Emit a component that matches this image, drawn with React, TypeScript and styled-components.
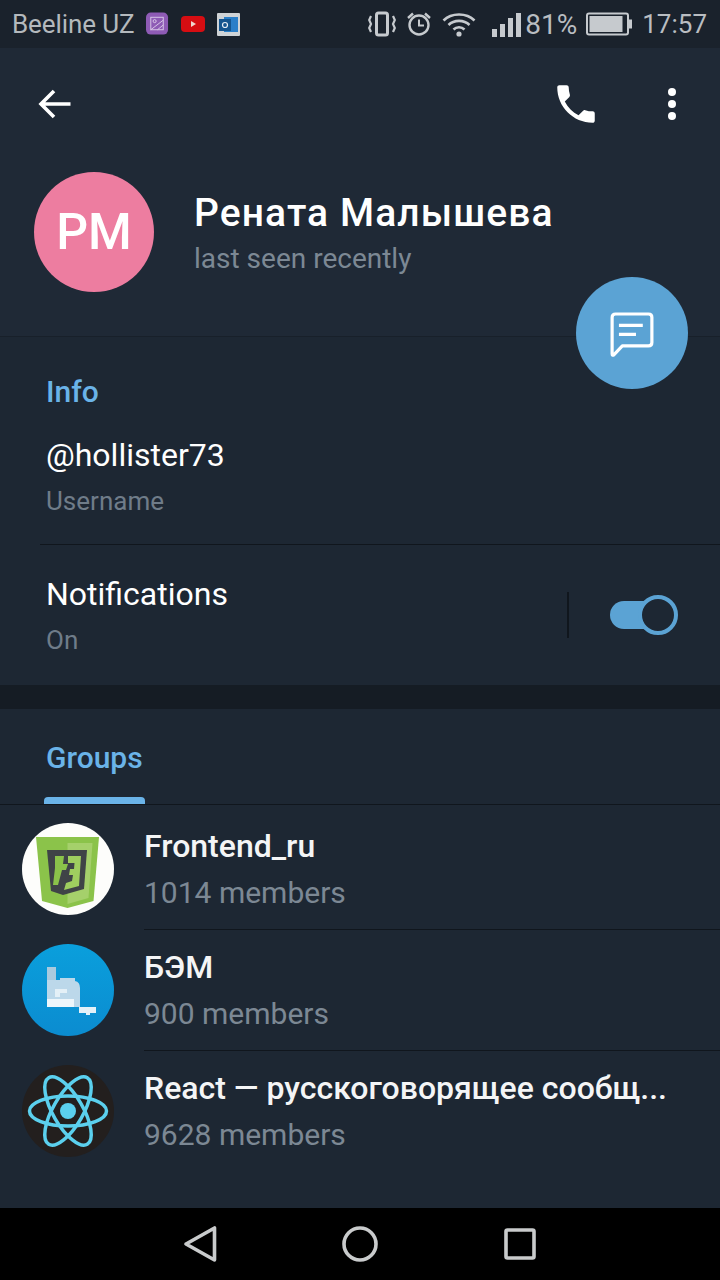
import styled, { createGlobalStyle } from "styled-components";

const GlobalStyle = createGlobalStyle`
  html, body { margin: 0; padding: 0; background: #1d2733; }
  body { font-family: Roboto, "Noto Sans", sans-serif; -webkit-font-smoothing: antialiased; }
  * { box-sizing: border-box; }
`;

const groups = [
  { name: "Frontend_ru", members: "1014 members", logo: "css" },
  { name: "БЭМ", members: "900 members", logo: "bem" },
  { name: "React — русскоговорящее сообщ...", members: "9628 members", logo: "react" },
];

const CssLogo = () => (
  <svg width="92" height="92" viewBox="0 0 92 92">
    <circle cx="46" cy="46" r="46" fill="#fdfdfb" />
    <path d="M14 14H77L71.500 78L45.500 85L20 78Z" fill="#8bc34a" />
    <path d="M45.500 20H70.500L66.500 75L45.500 81Z" fill="#a5d06b" />
    <path d="M25 27H65L62 66L41 72L29 68Z" fill="#3f4347" />
    <path d="M33 33H42L41 41H46L44 47H40L36 62H31L33 45Z" fill="#8bc34a" />
    <path d="M46 33H59L57 63L42 67L44 60L50 58L51 52H47L48 46H52L52.500 40H46Z" fill="#9fce5f" />
  </svg>
);

const BemLogo = () => (
  <svg width="92" height="92" viewBox="0 0 92 92">
    <defs>
      <linearGradient id="bemBg" x1="0" y1="0" x2="0" y2="1">
        <stop offset="0" stopColor="#0a9fdc" />
        <stop offset="1" stopColor="#0b8cd0" />
      </linearGradient>
    </defs>
    <circle cx="46" cy="46" r="46" fill="url(#bemBg)" />
    <path d="M25 23H34V36H38V34H53V37Q58 38 58 44V63H25Z" fill="#bcd8ea" />
    <path d="M25 23H34V36H25Z" fill="#a9cade" />
    <path d="M25 55H52V63H25Z" fill="#eef6fb" />
    <path d="M33 45H45V49H38V53H33Z" fill="#e4f0f7" />
    <path d="M57 63H74V69H68V71H64V69H57Z" fill="#e4f1f8" />
  </svg>
);

const ReactLogo = () => (
  <svg width="92" height="92" viewBox="0 0 92 92">
    <circle cx="46" cy="46" r="46" fill="#231f1e" />
    <g fill="none" stroke="#5bd0ee" strokeWidth="3.500">
      <ellipse cx="46" cy="46" rx="38.500" ry="15" />
      <ellipse cx="46" cy="46" rx="38.500" ry="15" transform="rotate(60 46 46)" />
      <ellipse cx="46" cy="46" rx="38.500" ry="15" transform="rotate(120 46 46)" />
    </g>
    <circle cx="46" cy="46" r="8" fill="#5bd0ee" />
  </svg>
);

const logos: Record<string, JSX.Element> = {
  css: <CssLogo />,
  bem: <BemLogo />,
  react: <ReactLogo />,
};

const App = (): JSX.Element => {
  return (
    <Page>
      <GlobalStyle />
      <StatusBar>
        <StatusSide $gap={12}>
          <Carrier>Beeline UZ</Carrier>
          <svg width="23" height="24" viewBox="0 0 24 24">
            <rect width="23" height="23" rx="5" fill="#8e5bb5" />
            <rect x="5" y="5" width="13" height="13" fill="none" stroke="#d9c8e8" strokeWidth="1" />
            <path d="M5 18L18 8M12 18L18 13" fill="none" stroke="#d9c8e8" />
            <circle cx="9" cy="9" r="1.600" fill="none" stroke="#d9c8e8" />
          </svg>
          <svg width="24" height="16" viewBox="0 0 24 16">
            <rect width="24" height="16" rx="4" fill="#d60d12" />
            <path d="M10 5L15 8L10 11Z" fill="#f0d8d0" />
          </svg>
          <svg width="23" height="23" viewBox="0 0 23 23">
            <rect width="23" height="23" rx="1" fill="#cfd3d6" />
            <rect x="7" y="4" width="14" height="15" fill="#2a7fc9" />
            <rect x="2" y="6" width="12" height="12" fill="#14558f" />
            <circle cx="8" cy="12" r="2.500" fill="none" stroke="#e6eef5" strokeWidth="1.200" />
          </svg>
        </StatusSide>
        <StatusSide $gap={10}>
          <svg width="28" height="26" viewBox="0 0 28 26">
            <rect x="8.500" y="2" width="11" height="22" rx="2" fill="none" stroke="#c6cace" strokeWidth="3" />
            <path d="M3 5L1.200 9L3 13L1.200 17L3 21M25 5L26.800 9L25 13L26.800 17L25 21" fill="none" stroke="#c6cace" strokeWidth="2.200" />
          </svg>
          <svg width="26" height="26" viewBox="0 0 26 26">
            <circle cx="13" cy="14" r="9.500" fill="none" stroke="#c6cace" strokeWidth="2.400" />
            <path d="M13 8.500V14.500H18" fill="none" stroke="#c6cace" strokeWidth="2" />
            <path d="M2 7L7 2.500M24 7L19 2.500" fill="none" stroke="#c6cace" strokeWidth="2.400" />
          </svg>
          <WifiIcon width="34" height="26" viewBox="0 0 34 26">
            <g fill="none" stroke="#c6cace" strokeWidth="2.600">
              <path d="M1.500 9.500C9.500 1.500 24.500 1.500 32.500 9.500" />
              <path d="M6.500 14C12 8.500 22 8.500 27.500 14" />
              <path d="M11.500 18.500C14.500 15.500 19.500 15.500 22.500 18.500" />
            </g>
            <circle cx="17" cy="23" r="2.600" fill="#c6cace" />
          </WifiIcon>
          <SignalBars>
            <Bar $h={8} />
            <Bar $h={13} />
            <Bar $h={19} />
            <Bar $h={24} />
          </SignalBars>
          <Percent>81%</Percent>
          <svg width="46" height="24" viewBox="0 0 46 24">
            <rect x="1" y="1.500" width="41" height="21" rx="2" fill="none" stroke="#c6cace" strokeWidth="2" />
            <rect x="3.500" y="4" width="33" height="16" fill="#c6cace" />
            <rect x="43" y="7.500" width="3" height="9" fill="#c6cace" />
          </svg>
          <Clock>17:57</Clock>
        </StatusSide>
      </StatusBar>

      <Header>
        <TopBar>
          <svg width="36" height="36" viewBox="0 0 36 36">
            <path d="M33.500 18H4M17 5L4 18L17 31" fill="none" stroke="#fff" strokeWidth="3.600" />
          </svg>
          <TopActions>
            <svg width="50" height="50" viewBox="0 0 24 24">
              <path fill="#fff" d="M6.620 10.790c1.440 2.830 3.760 5.140 6.590 6.590l2.200-2.200c.27-.27.67-.36 1.020-.24 1.120.37 2.330.57 3.570.57.550 0 1 .45 1 1V20c0 .550-.45 1-1 1-9.390 0-17-7.610-17-17 0-.550.450-1 1-1h3.500c.55 0 1 .45 1 1 0 1.250.2 2.450.57 3.570.11.350.03.740-.25 1.020l-2.200 2.200z" />
            </svg>
            <Dots>
              <Dot />
              <Dot />
              <Dot />
            </Dots>
          </TopActions>
        </TopBar>
        <Profile>
          <Avatar>РМ</Avatar>
          <ProfileText>
            <ProfileName>Рената Малышева</ProfileName>
            <ProfileStatus>last seen recently</ProfileStatus>
          </ProfileText>
        </Profile>
        <Fab>
          <svg width="50" height="50" viewBox="1.500 -0.500 44 44">
            <path d="M6 6Q6 3 9 3H38Q41 3 41 6V28Q41 31 38 31H15L7.500 39Q6 40 6 38Z" fill="none" stroke="#fff" strokeWidth="2.800" strokeLinejoin="round" />
            <path d="M12 13H33M12 21H27" fill="none" stroke="#fff" strokeWidth="2.800" />
          </svg>
        </Fab>
      </Header>

      <InfoSection>
        <SectionTitle>Info</SectionTitle>
        <InfoRow>
          <Primary>@hollister73</Primary>
          <Secondary>Username</Secondary>
        </InfoRow>
        <RowDivider />
        <NotifyRow>
          <div>
            <Primary>Notifications</Primary>
            <Secondary>On</Secondary>
          </div>
          <NotifyControls>
            <VLine />
            <Toggle>
              <ToggleKnob />
            </Toggle>
          </NotifyControls>
        </NotifyRow>
      </InfoSection>

      <Gap />

      <GroupsSection>
        <TabHead>
          <TabTitle>Groups</TabTitle>
          <TabMark />
        </TabHead>
        <GroupList>
          {groups.map((g) => (
            <GroupRow key={g.name}>
              <GroupLogo>{logos[g.logo]}</GroupLogo>
              <GroupBody>
                <GroupName>{g.name}</GroupName>
                <GroupMembers>{g.members}</GroupMembers>
              </GroupBody>
            </GroupRow>
          ))}
        </GroupList>
      </GroupsSection>

      <NavBar>
        <svg width="40" height="40" viewBox="0 0 40 40">
          <path d="M34.500 4V36L6 20Z" fill="none" stroke="#c9cbcc" strokeWidth="3.600" strokeLinejoin="round" />
        </svg>
        <svg width="40" height="40" viewBox="0 0 40 40">
          <circle cx="20" cy="20" r="16" fill="none" stroke="#c9cbcc" strokeWidth="3.600" />
        </svg>
        <svg width="40" height="40" viewBox="0 0 40 40">
          <rect x="6" y="6" width="28" height="28" rx="1.500" fill="none" stroke="#c9cbcc" strokeWidth="3.600" />
        </svg>
      </NavBar>
    </Page>
  );
};

export default App;

const Page = styled.div`
  width: 720px;
  height: 1280px;
  display: flex;
  flex-direction: column;
  background: #1d2733;
  overflow: hidden;
`;
const StatusBar = styled.div`
  height: 48px;
  flex: none;
  background: #1a222c;
  display: flex;
  justify-content: space-between;
  align-items: center;
  padding: 0 13px 0 12px;
`;
const StatusSide = styled.div<{ $gap: number }>`
  display: flex;
  align-items: center;
  gap: ${(p) => p.$gap}px;
`;
const Carrier = styled.span`
  font-size: 26px;
  color: #b4b9bd;
  letter-spacing: -0.1px;
`;
const WifiIcon = styled.svg`
  margin-right: 6px;
`;
const SignalBars = styled.div`
  display: flex;
  align-items: flex-end;
  gap: 3px;
  height: 25px;
  margin-right: -6px;
`;
const Bar = styled.div<{ $h: number }>`
  width: 5px;
  height: ${(p) => p.$h}px;
  background: #c6cace;
`;
const Percent = styled.span`
  font-size: 28px;
  color: #b9bdc1;
  margin-right: -1px;
`;
const Clock = styled.span`
  font-size: 26px;
  color: #b9bdc1;
`;
const Header = styled.div`
  position: relative;
  height: 289px;
  flex: none;
  background: #1f2936;
  border-bottom: 1px solid #18202a;
  padding: 0 0 0 34px;
`;
const TopBar = styled.div`
  height: 112px;
  display: flex;
  align-items: center;
  justify-content: space-between;
  padding: 0 44px 0 3px;
`;
const TopActions = styled.div`
  display: flex;
  align-items: center;
  gap: 67px;
`;
const Dots = styled.div`
  display: flex;
  flex-direction: column;
  gap: 4px;
`;
const Dot = styled.span`
  width: 8px;
  height: 8px;
  border-radius: 50%;
  background: #fff;
`;
const Profile = styled.div`
  margin-top: 12px;
  display: flex;
  align-items: center;
  gap: 40px;
`;
const Avatar = styled.div`
  width: 120px;
  height: 120px;
  border-radius: 50%;
  background: #ed7da0;
  color: #fff;
  font-size: 50px;
  font-weight: 500;
  display: flex;
  align-items: center;
  justify-content: center;
`;
const ProfileText = styled.div`
  display: flex;
  flex-direction: column;
  gap: 6px;
  padding-top: 4px;
`;
const ProfileName = styled.div`
  font-size: 39px;
  line-height: 44px;
  font-weight: 500;
  letter-spacing: 1.1px;
  color: #fff;
`;
const ProfileStatus = styled.div`
  font-size: 28px;
  line-height: 36px;
  color: #7c8894;
`;
const Fab = styled.div`
  position: absolute;
  left: 576px;
  top: 229px;
  width: 112px;
  height: 112px;
  border-radius: 50%;
  background: #5ba3d4;
  display: flex;
  align-items: center;
  justify-content: center;
  padding-top: 4px;
`;
const InfoSection = styled.div`
  height: 348px;
  flex: none;
  padding-top: 38px;
`;
const SectionTitle = styled.div`
  font-size: 30px;
  line-height: 34px;
  font-weight: 500;
  color: #6ab3e8;
  margin-left: 46px;
`;
const InfoRow = styled.div`
  padding: 25px 0 0 46px;
`;
const Primary = styled.div`
  font-size: 32px;
  line-height: 42px;
  color: #fff;
`;
const Secondary = styled.div`
  font-size: 26px;
  line-height: 32px;
  margin-top: 9px;
  color: #6f7c89;
`;
const RowDivider = styled.div`
  height: 1px;
  background: #10161d;
  margin: 27px 0 0 40px;
`;
const NotifyRow = styled.div`
  display: flex;
  justify-content: space-between;
  padding: 28px 42px 0 46px;
`;
const NotifyControls = styled.div`
  display: flex;
  align-items: center;
  gap: 41px;
  margin-right: 2px;
`;
const VLine = styled.div`
  width: 2px;
  height: 46px;
  background: #10161d;
`;
const Toggle = styled.div`
  position: relative;
  width: 66px;
  height: 28px;
  border-radius: 14px;
  background: #5ba3d4;
`;
const ToggleKnob = styled.div`
  position: absolute;
  right: -2px;
  top: -6px;
  width: 40px;
  height: 40px;
  border-radius: 50%;
  background: #1d2733;
  border: 4px solid #5ba3d4;
`;
const Gap = styled.div`
  height: 24px;
  flex: none;
  background: #151c24;
`;
const GroupsSection = styled.div`
  flex: 1;
  display: flex;
  flex-direction: column;
`;
const TabHead = styled.div`
  height: 96px;
  flex: none;
  border-bottom: 1px solid #10161d;
  padding: 32px 0 0 46px;
  position: relative;
`;
const TabTitle = styled.div`
  font-size: 30px;
  line-height: 34px;
  font-weight: 500;
  color: #6ab3e8;
`;
const TabMark = styled.div`
  position: absolute;
  left: 44px;
  bottom: 0;
  width: 101px;
  height: 7px;
  background: #6ab3e8;
  border-radius: 4px 4px 0 0;
`;
const GroupList = styled.div`
  display: flex;
  flex-direction: column;
  padding-top: 4px;
`;
const GroupRow = styled.div`
  height: 121px;
  display: flex;
  align-items: center;
  padding-left: 22px;
  gap: 30px;
`;
const GroupLogo = styled.div`
  width: 92px;
  height: 92px;
  flex: none;
  margin-bottom: 2px;
  svg { display: block; }
`;
const GroupBody = styled.div`
  flex: 1;
  height: 121px;
  padding-top: 18px;
  border-bottom: 1px solid #10161d;
  ${GroupRow}:last-child & { border-bottom: none; }
`;
const GroupName = styled.div`
  font-size: 32px;
  line-height: 38px;
  font-weight: 500;
  color: #f4f5f6;
`;
const GroupMembers = styled.div`
  font-size: 30px;
  line-height: 36px;
  margin-top: 10px;
  color: #7c8894;
`;
const NavBar = styled.div`
  height: 72px;
  flex: none;
  background: #000;
  display: flex;
  align-items: center;
  justify-content: space-between;
  padding: 0 180px;
`;
